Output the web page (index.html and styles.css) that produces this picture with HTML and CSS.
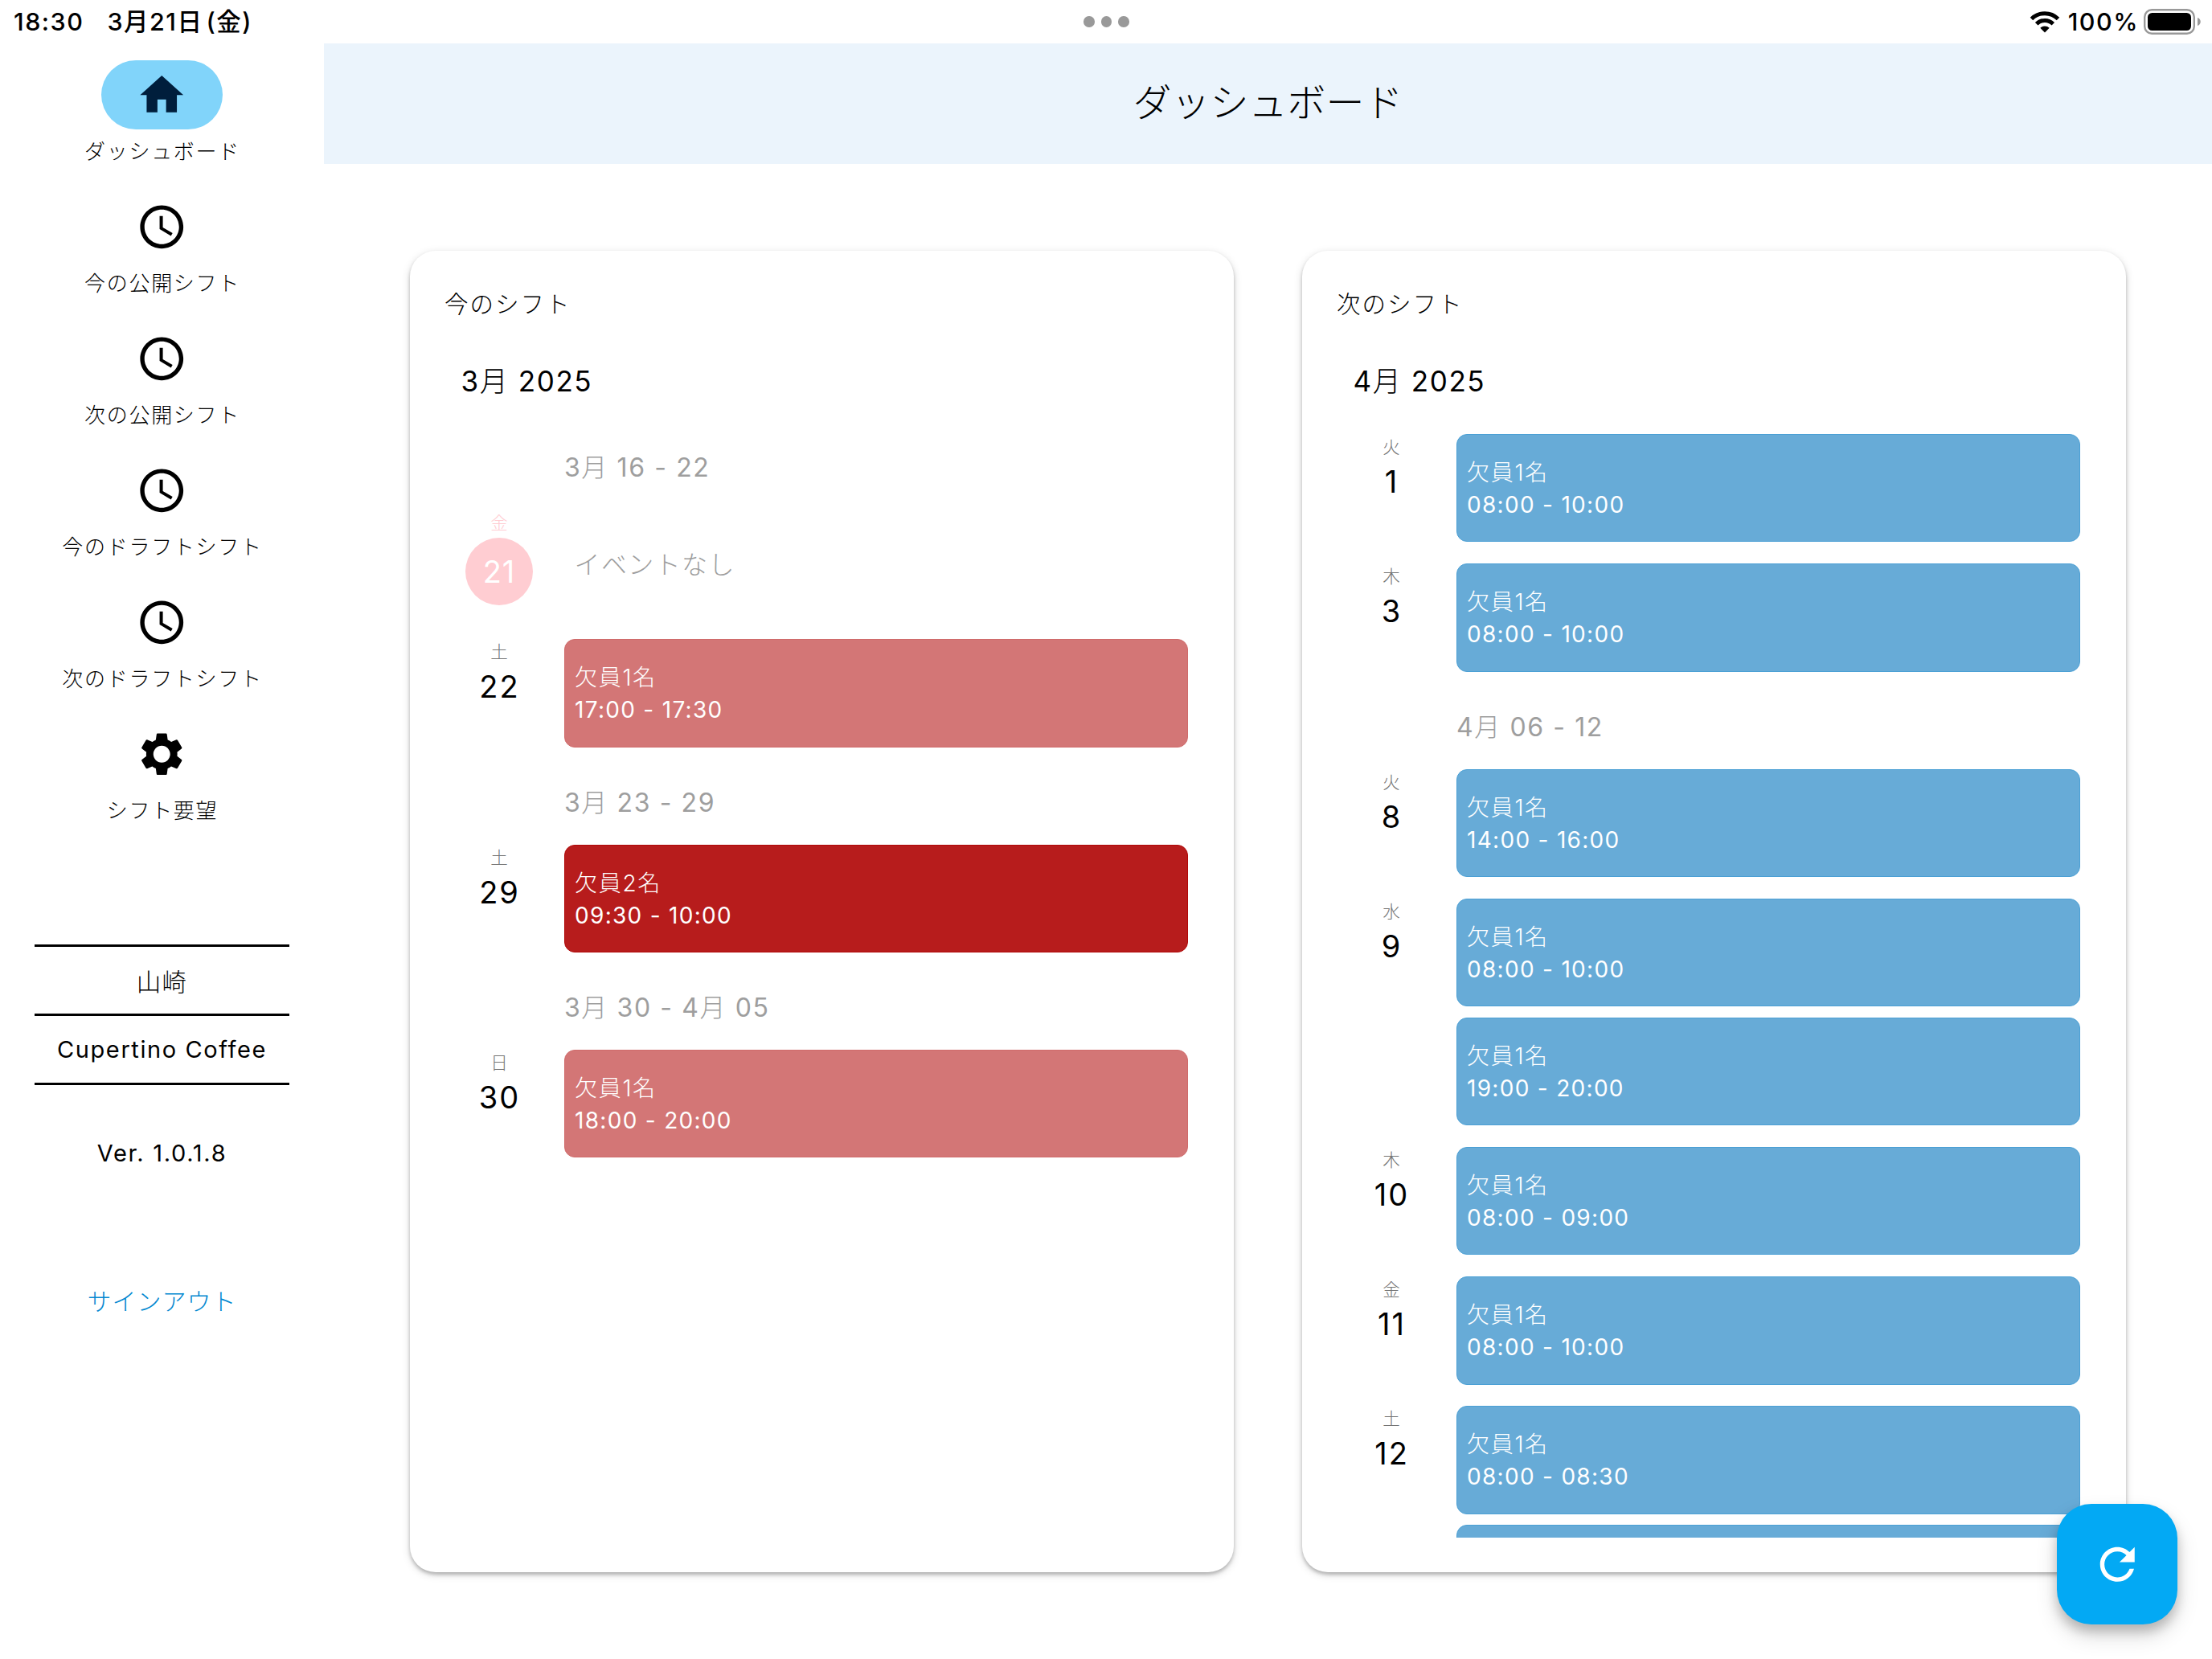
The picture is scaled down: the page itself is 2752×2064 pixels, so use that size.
FILE: index.html
```html
<!DOCTYPE html>
<html lang="ja">
<head>
    <meta charset="UTF-8">
    <meta name="viewport" content="width=device-width, initial-scale=1.0">
    <title>ダッシュボード</title>
    <link rel="stylesheet" href="styles.css">
</head>
<body>

<svg class="icon-defs">
    <symbol id="icon-home" viewBox="0 0 24 24"><path d="M10 20v-6h4v6h5v-8h3L12 3 2 12h3v8z"/></symbol>
    <symbol id="icon-clock" viewBox="0 0 24 24"><path d="M11.99 2C6.47 2 2 6.48 2 12s4.47 10 9.99 10C17.52 22 22 17.52 22 12S17.52 2 11.99 2zM12 20c-4.42 0-8-3.58-8-8s3.58-8 8-8 8 3.58 8 8-3.58 8-8 8zm.5-13H11v6l5.25 3.15.75-1.23-4.5-2.67z"/></symbol>
    <symbol id="icon-settings" viewBox="0 0 24 24"><path d="M19.14 12.94c.04-.3.06-.61.06-.94 0-.32-.02-.64-.07-.94l2.03-1.58c.18-.14.23-.41.12-.61l-1.92-3.32c-.12-.22-.37-.29-.59-.22l-2.39.96c-.5-.38-1.03-.7-1.62-.94l-.36-2.54c-.04-.24-.24-.41-.48-.41h-3.84c-.24 0-.43.17-.47.41l-.36 2.54c-.59.24-1.13.57-1.62.94l-2.39-.96c-.22-.08-.47 0-.59.22L2.74 8.87c-.12.21-.08.47.12.61l2.03 1.58c-.05.3-.09.63-.09.94s.02.64.07.94l-2.03 1.58c-.18.14-.23.41-.12.61l1.92 3.32c.12.22.37.29.59.22l2.39-.96c.5.38 1.03.7 1.62.94l.36 2.54c.05.24.24.41.48.41h3.84c.24 0 .44-.17.47-.41l.36-2.54c.59-.24 1.13-.56 1.62-.94l2.39.96c.22.08.47 0 .59-.22l1.92-3.32c.12-.22.07-.47-.12-.61l-2.01-1.58zM12 15.9c-2.15 0-3.9-1.75-3.9-3.9s1.75-3.9 3.9-3.9 3.9 1.75 3.9 3.9-1.75 3.9-3.9 3.9z"/></symbol>
    <symbol id="icon-refresh" viewBox="0 0 24 24"><path d="M17.65 6.35C16.2 4.9 14.21 4 12 4c-4.42 0-7.99 3.58-7.99 8s3.57 8 7.99 8c3.73 0 6.84-2.55 7.73-6h-2.08c-.82 2.33-3.04 4-5.65 4-3.31 0-6-2.69-6-6s2.69-6 6-6c1.66 0 3.14.69 4.22 1.78L13 11h7V4l-2.35 2.35z"/></symbol>
</svg>

<div class="status-bar">
    <div class="status-left">
        <span class="status-time">18:30</span>
        <span>3月21日<span class="paren">(</span>金)</span>
    </div>
    <div class="status-dots"><i></i><i></i><i></i></div>
    <div class="status-right">
        <svg class="wifi" viewBox="0 0 38 28">
            <path d="M2.5 10.5A23.5 23.5 0 0 1 35.500 10.500" />
            <path d="M8.700 16.700A14.600 14.600 0 0 1 29.300 16.700" />
            <path class="wifi-dot" d="M19 27.500L13.300 21.800A8.100 8.100 0 0 1 24.700 21.800Z" />
        </svg>
        <span class="percent">100%</span>
        <svg class="battery" viewBox="0 0 74 32">
            <rect class="battery-frame" x="1.200" y="1.200" width="61.600" height="29.600" rx="9"/>
            <rect x="5" y="5" width="54" height="22" rx="5.500"/>
            <path class="battery-tip" d="M67 11c5 1.500 5 8.500 0 10z"/>
        </svg>
    </div>
</div>

<div class="app">
    <aside class="sidebar">
        <nav class="nav">
            <a class="nav-item active">
                <span class="nav-icon"><svg><use href="#icon-home"/></svg></span>
                <span class="nav-label">ダッシュボード</span>
            </a>
            <a class="nav-item">
                <span class="nav-icon"><svg><use href="#icon-clock"/></svg></span>
                <span class="nav-label">今の公開シフト</span>
            </a>
            <a class="nav-item">
                <span class="nav-icon"><svg><use href="#icon-clock"/></svg></span>
                <span class="nav-label">次の公開シフト</span>
            </a>
            <a class="nav-item">
                <span class="nav-icon"><svg><use href="#icon-clock"/></svg></span>
                <span class="nav-label">今のドラフトシフト</span>
            </a>
            <a class="nav-item">
                <span class="nav-icon"><svg><use href="#icon-clock"/></svg></span>
                <span class="nav-label">次のドラフトシフト</span>
            </a>
            <a class="nav-item">
                <span class="nav-icon"><svg><use href="#icon-settings"/></svg></span>
                <span class="nav-label">シフト要望</span>
            </a>
        </nav>
        <div class="account">
            <div class="account-row">山崎</div>
            <div class="account-row store">Cupertino Coffee</div>
        </div>
        <div class="version">Ver. 1.0.1.8</div>
        <a class="sign-out">サインアウト</a>
    </aside>

    <div class="page">
        <header class="page-header">
            <h1>ダッシュボード</h1>
        </header>

        <main class="cards">
            <section class="card">
                <h2>今のシフト</h2>
                <h3>3月 2025</h3>
                <div class="schedule">
                    <div class="week">3月 16 - 22</div>
                    <div class="day today">
                        <div class="date"><span class="weekday">金</span><span class="number">21</span></div>
                        <div class="events"><div class="no-event">イベントなし</div></div>
                    </div>
                    <div class="day">
                        <div class="date"><span class="weekday">土</span><span class="number">22</span></div>
                        <div class="events">
                            <div class="event light-red"><span>欠員1名</span><span class="time">17:00 - 17:30</span></div>
                        </div>
                    </div>
                    <div class="week">3月 23 - 29</div>
                    <div class="day">
                        <div class="date"><span class="weekday">土</span><span class="number">29</span></div>
                        <div class="events">
                            <div class="event red"><span>欠員2名</span><span class="time">09:30 - 10:00</span></div>
                        </div>
                    </div>
                    <div class="week">3月 30 - 4月 05</div>
                    <div class="day">
                        <div class="date"><span class="weekday">日</span><span class="number">30</span></div>
                        <div class="events">
                            <div class="event light-red"><span>欠員1名</span><span class="time">18:00 - 20:00</span></div>
                        </div>
                    </div>
                </div>
            </section>

            <section class="card">
                <h2>次のシフト</h2>
                <h3>4月 2025</h3>
                <div class="schedule">
                    <div class="day">
                        <div class="date"><span class="weekday">火</span><span class="number">1</span></div>
                        <div class="events">
                            <div class="event"><span>欠員1名</span><span class="time">08:00 - 10:00</span></div>
                        </div>
                    </div>
                    <div class="day">
                        <div class="date"><span class="weekday">木</span><span class="number">3</span></div>
                        <div class="events">
                            <div class="event"><span>欠員1名</span><span class="time">08:00 - 10:00</span></div>
                        </div>
                    </div>
                    <div class="week">4月 06 - 12</div>
                    <div class="day">
                        <div class="date"><span class="weekday">火</span><span class="number">8</span></div>
                        <div class="events">
                            <div class="event"><span>欠員1名</span><span class="time">14:00 - 16:00</span></div>
                        </div>
                    </div>
                    <div class="day">
                        <div class="date"><span class="weekday">水</span><span class="number">9</span></div>
                        <div class="events">
                            <div class="event"><span>欠員1名</span><span class="time">08:00 - 10:00</span></div>
                            <div class="event"><span>欠員1名</span><span class="time">19:00 - 20:00</span></div>
                        </div>
                    </div>
                    <div class="day">
                        <div class="date"><span class="weekday">木</span><span class="number">10</span></div>
                        <div class="events">
                            <div class="event"><span>欠員1名</span><span class="time">08:00 - 09:00</span></div>
                        </div>
                    </div>
                    <div class="day">
                        <div class="date"><span class="weekday">金</span><span class="number">11</span></div>
                        <div class="events">
                            <div class="event"><span>欠員1名</span><span class="time">08:00 - 10:00</span></div>
                        </div>
                    </div>
                    <div class="day">
                        <div class="date"><span class="weekday">土</span><span class="number">12</span></div>
                        <div class="events">
                            <div class="event"><span>欠員1名</span><span class="time">08:00 - 08:30</span></div>
                            <div class="event"></div>
                        </div>
                    </div>
                </div>
            </section>
        </main>
    </div>
</div>

<button class="fab" aria-label="refresh"><svg><use href="#icon-refresh"/></svg></button>

</body>
</html>
```
FILE: styles.css
```css
* {
    box-sizing: border-box;
}

body {
    margin: 0;
    height: 2064px;
    display: flex;
    flex-direction: column;
    overflow: hidden;
    background-color: #fff;
    color: #000;
    font-family: Inter, "Noto Sans CJK JP", sans-serif;
    font-weight: 300;
}

h1, h2, h3 {
    margin: 0;
    font-weight: 300;
}

.icon-defs {
    display: none;
}

/* status bar */
.status-bar {
    flex: none;
    height: 54px;
    display: grid;
    grid-template-columns: 1fr auto 1fr;
    align-items: center;
    padding: 0 11px 0 17px;
    font-size: 30.5px;
    font-weight: 500;
    line-height: 54px;
    letter-spacing: 1.5px;
}

.status-left {
    display: flex;
    gap: 29px;
    height: 54px;
}

.paren {
    margin-left: 4px;
}

.status-dots {
    display: flex;
    gap: 8px;
    margin-right: 5px;
}

.status-dots i {
    width: 13.5px;
    height: 13.5px;
    border-radius: 50%;
    background-color: #999;
}

.status-right {
    display: flex;
    justify-content: flex-end;
    align-items: center;
}

.wifi {
    width: 38px;
    height: 28px;
    margin-right: 10px;
    fill: none;
    stroke: #000;
    stroke-width: 5;
}

.wifi .wifi-dot {
    fill: #000;
    stroke: none;
}

.percent {
    margin-right: 6px;
}

.battery {
    width: 74px;
    height: 32px;
}

.battery-frame {
    fill: none;
    stroke: #999;
    stroke-width: 2.4;
}

.battery-tip {
    fill: #999;
}

.app {
    flex: 1;
    display: flex;
    min-height: 0;
}

/* sidebar */
.sidebar {
    width: 403px;
    padding-top: 21px;
    display: flex;
    flex-direction: column;
    align-items: center;
}

.nav-item {
    height: 164px;
    display: flex;
    flex-direction: column;
    align-items: center;
}

.nav-icon {
    width: 151px;
    height: 86px;
    border-radius: 43px;
    display: flex;
    align-items: center;
    justify-content: center;
}

.nav-icon svg {
    width: 64.5px;
    height: 64.5px;
}

.active .nav-icon {
    background-color: #81d4fa;
    fill: #001e3c;
}

.nav-label {
    height: 56px;
    padding-left: 1px;
    line-height: 56px;
    font-size: 26px;
    letter-spacing: 1.7px;
}

.account {
    width: 317px;
    margin-top: 116px;
    border-top: 3px solid #000;
}

.account-row {
    height: 86px;
    border-bottom: 3px solid #000;
    line-height: 87px;
    text-align: center;
    font-size: 30.5px;
    letter-spacing: 1.3px;
}

.store {
    line-height: 83px;
    font-size: 29px;
    font-weight: 400;
    letter-spacing: 1.6px;
}

.version {
    margin-top: 60px;
    height: 50px;
    line-height: 50px;
    font-size: 29px;
    font-weight: 400;
    letter-spacing: 1.7px;
}

.sign-out {
    margin-top: 134px;
    height: 50px;
    line-height: 50px;
    font-size: 30px;
    letter-spacing: 1px;
    color: #0288d1;
}

/* page */
.page {
    flex: 1;
    display: flex;
    flex-direction: column;
}

.page-header {
    height: 150px;
    background-color: #ebf4fc;
    text-align: center;
}

.page-header h1 {
    font-size: 48px;
    line-height: 148px;
}

.cards {
    flex: 1;
    display: flex;
    gap: 85px;
    padding: 108px 107px 108px;
}

.card {
    flex: 1;
    height: 1644px;
    padding: 43px 43px;
    border-radius: 32px;
    background-color: #fff;
    box-shadow: 0 3px 4px rgba(0, 0, 0, 0.22), 0 3px 11px rgba(0, 0, 0, 0.15);
    overflow: hidden;
}

.card h2 {
    height: 46px;
    line-height: 46px;
    font-size: 29.5px;
    letter-spacing: 2px;
}

.card h3 {
    height: 60px;
    margin: 43px 0 36px 20.5px;
    line-height: 60px;
    font-size: 35px;
    font-weight: 400;
    letter-spacing: 1.6px;
    font-family: Inter, "Noto Sans CJK JP Light", "Noto Sans CJK JP", sans-serif;
}

.schedule {
    height: 1373px;
    padding: 0 14px 0 22px;
    overflow: hidden;
}

.week {
    height: 94px;
    padding-left: 127px;
    line-height: 84px;
    font-size: 32px;
    font-weight: 400;
    letter-spacing: 1.6px;
    color: #9e9e9e;
    font-family: Inter, "Noto Sans CJK JP Light", "Noto Sans CJK JP", sans-serif;
}

.day {
    display: flex;
    padding-bottom: 26.9px;
}

.date {
    width: 92px;
    margin-right: 34.5px;
    display: flex;
    flex-direction: column;
    align-items: center;
}

.weekday {
    height: 35px;
    line-height: 32px;
    font-size: 21.5px;
    color: #757575;
}

.number {
    height: 46px;
    padding-left: 1px;
    line-height: 48px;
    font-size: 38px;
    font-weight: 400;
    letter-spacing: 2px;
}

.today .weekday {
    color: #ffcdd2;
}

.today .number {
    width: 84px;
    height: 84px;
    padding-left: 0;
    line-height: 84px;
    border-radius: 50%;
    background-color: #ffcdd2;
    color: #fff;
    text-align: center;
    letter-spacing: 1px;
}

.events {
    flex: 1;
    display: flex;
    flex-direction: column;
    gap: 13.4px;
}

.event {
    height: 134.4px;
    padding: 26px 12.5px;
    border: 1px solid #4ba0d5;
    border-radius: 13px;
    background-color: #67abd7;
    color: #fff;
    font-size: 28px;
    letter-spacing: 1.7px;
}

.event span {
    display: block;
    height: 41px;
    line-height: 43px;
}

.event .time {
    line-height: 41px;
    font-weight: 400;
    letter-spacing: 1.3px;
}

.light-red {
    border-color: #d06b6b;
    background-color: #d37676;
}

.red {
    border-color: #b00808;
    background-color: #b71c1c;
}

.no-event {
    height: 134.4px;
    padding-left: 13px;
    line-height: 137px;
    font-size: 32px;
    letter-spacing: 1.4px;
    color: #9e9e9e;
}

/* floating button over the cards */
.fab {
    position: absolute;
    right: 43px;
    bottom: 43px;
    width: 150.5px;
    height: 150.5px;
    padding: 0;
    display: flex;
    align-items: center;
    justify-content: center;
    border: none;
    border-radius: 43px;
    background-color: #03a9f4;
    box-shadow: 0 9px 14px rgba(0, 0, 0, 0.2), 0 14px 28px rgba(0, 0, 0, 0.14);
}

.fab svg {
    width: 64.5px;
    height: 64.5px;
    fill: #fff;
}
```
